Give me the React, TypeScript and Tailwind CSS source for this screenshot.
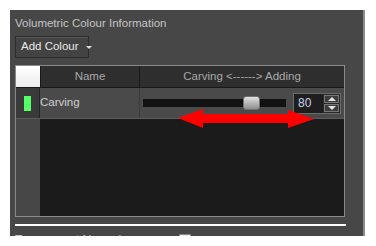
import React from "react";

const font = { fontFamily: '"Liberation Sans", Arial, sans-serif' };

function Spin() {
  return (
    <div className="ml-[7px] flex h-[21px] w-[48px] shrink-0 border border-[#6a6a6a] bg-[#1e1e1e]">
      <div className="flex flex-1 items-center pl-[4px] text-[12px] text-[#c9d2e6]">80</div>
      <div className="flex w-[17px] flex-col gap-[1px] bg-[#2a2a2a] p-[1px]">
        <div className="flex flex-1 items-center justify-center border border-[#777] bg-[#3d3d3d]">
          <div className="h-0 w-0 border-x-[4px] border-b-[4px] border-x-transparent border-b-[#e6e6e6]" />
        </div>
        <div className="flex flex-1 items-center justify-center border border-[#777] bg-[#3d3d3d]">
          <div className="h-0 w-0 border-x-[4px] border-t-[4px] border-x-transparent border-t-[#e6e6e6]" />
        </div>
      </div>
    </div>
  );
}

export default function App() {
  return (
    <div className="relative h-[246px] w-[376px] bg-white pl-[10px] pt-[10px]" style={font}>
      <div className="flex h-[226px] w-[355px] flex-col overflow-hidden border-r-2 border-[#8c8c8c] bg-[#474747] pl-[5px]">
        {/* title */}
        <div className="mt-[6px] h-[14px] shrink-0 whitespace-nowrap text-[11.5px] leading-[14px] text-[#c4c4c4]">Volumetric Colour Information</div>

        {/* add colour button */}
        <div className="mt-[6px] flex h-[22px] w-[74px] shrink-0 items-center gap-[7px] whitespace-nowrap border border-[#2c2c2c] bg-[#434343] pl-[5px] shadow-[inset_0_1px_0_#5a5a5a]">
          <span className="text-[11.5px] text-[#e8e8e8]">Add Colour</span>
          <div className="h-0 w-0 border-x-[3px] border-t-[3px] border-x-transparent border-t-[#dcdcdc]" />
        </div>

        {/* table */}
        <div className="mt-[7px] flex h-[152px] w-[330px] shrink-0 flex-col border border-[#8a8a8a] bg-[#1b1b1b]">
          <div className="flex h-[22px] shrink-0 border-b border-[#1a1a1a]">
            <div className="w-[24px] bg-gradient-to-b from-white to-[#ececec]" />
            <div className="flex w-[100px] items-center justify-center border-x border-[#1a1a1a] bg-[#2e2e2e] text-[11.5px] text-[#a9a9a9]">Name</div>
            <div className="flex flex-1 items-center justify-center whitespace-nowrap bg-[#2e2e2e] text-[11.5px] text-[#a9a9a9]">Carving &lt;------&gt; Adding</div>
          </div>
          <div className="flex h-[31px] shrink-0 border-b border-[#5c5c5c]">
            <div className="flex w-[24px] items-center justify-center border-r border-[#252525] bg-[#3a3a3a]">
              <div className="h-[15px] w-[7px] bg-[#55ff66]" />
            </div>
            <div className="flex w-[100px] items-center border-r border-[#3a3a3a] bg-[#4a4a4a] text-[11.5px] text-[#cfcfcf]">Carving</div>
            <div className="flex flex-1 items-center bg-[#4a4a4a] pl-[3px]">
              <div className="relative h-[8px] w-[143px] shrink-0 bg-[#121212]">
                <div className="absolute left-[100px] top-[-3px] h-[14px] w-[17px] rounded-[3px] border border-[#707070] bg-gradient-to-b from-[#e2e2e2] to-[#8e8e8e]" />
              </div>
              <Spin />
            </div>
          </div>
          <div className="flex flex-1">
            <div className="w-[24px] bg-[#474747]" />
            <div className="flex-1" />
          </div>
        </div>

        <div className="mt-[7px] h-[2px] w-[331px] shrink-0 bg-white" />

        <div className="mt-[5px] flex shrink-0 items-center whitespace-nowrap text-[12px] text-[#c4c4c4]">
          <span>Transparent Normals</span>
          <div className="ml-[52px] h-[12px] w-[12px] border border-[#888] bg-gradient-to-b from-[#f0f0f0] to-[#bcc4d8]" />
        </div>
      </div>

      {/* red double arrow annotation */}
      <svg className="absolute left-0 top-0" width="376" height="246">
        <polygon
          points="178,118 203,109 203,114 288,114 288,110 314,119 288,128 288,123 203,123 203,128"
          fill="#ff0000"
        />
      </svg>
    </div>
  );
}
